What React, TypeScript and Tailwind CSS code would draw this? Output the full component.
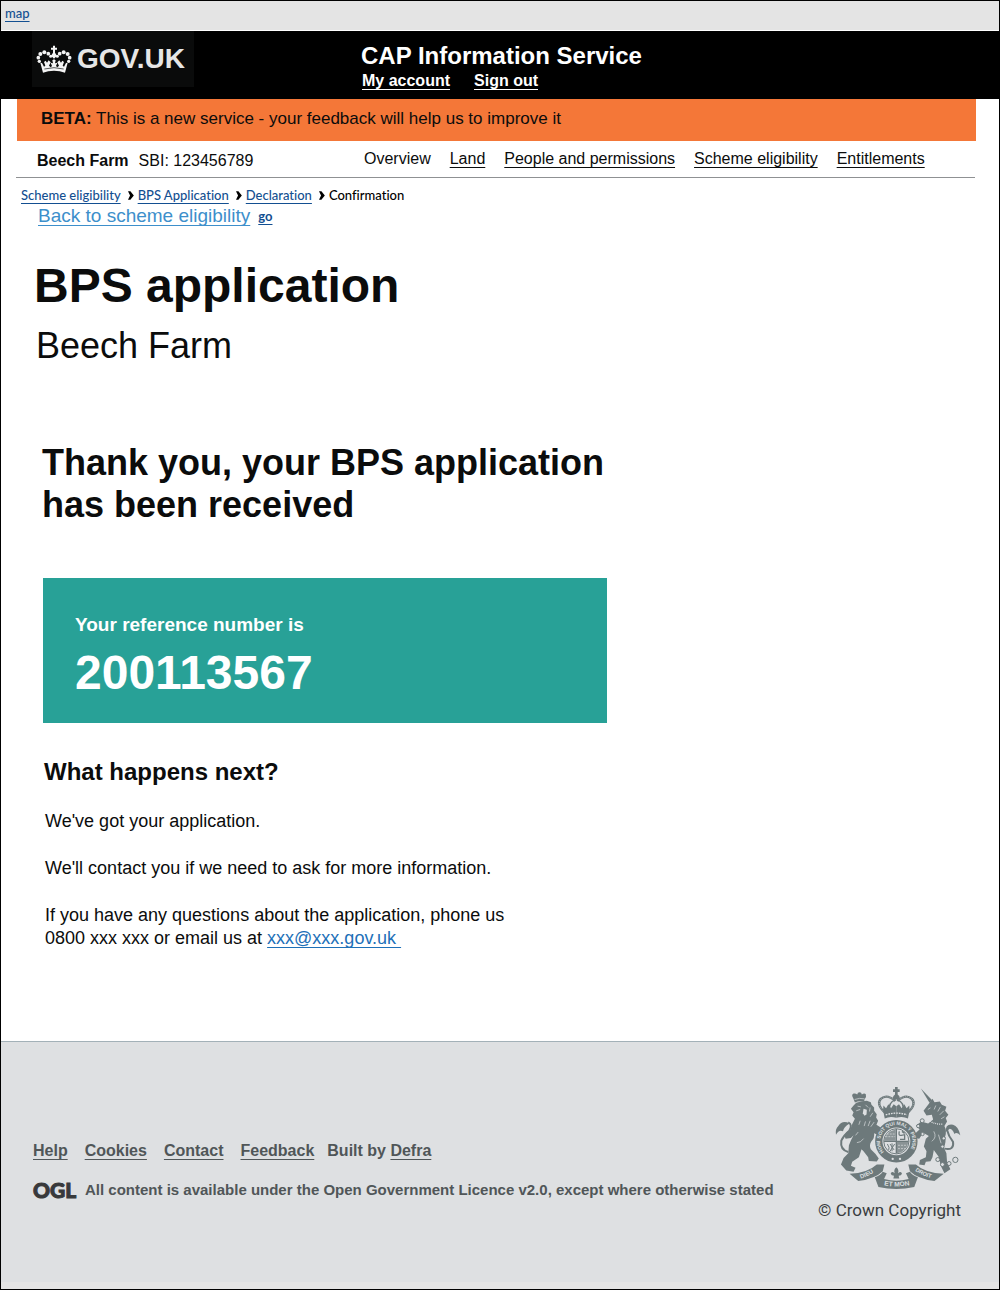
import React from "react";

const link = "underline decoration-1 underline-offset-[3px] [text-decoration-skip-ink:none]";

function GovCrown() {
  const half = (
    <g>
      <circle cx="55" cy="41" r="5.5" />
      <circle cx="43" cy="37" r="6" />
      <circle cx="31" cy="42" r="6" />
      <circle cx="25" cy="53" r="5.5" />
      <circle cx="28" cy="64" r="5" />
      <circle cx="62" cy="49" r="4.5" />
      <path d="M31 68L36 69L42 80L46 77L42 66L47 62L51 68L56 61L62 67L57 77L62 82L66 78L62 68L69 70L67 61L72 58V92Q54 92 39 98Z" />
    </g>
  );
  return (
    <svg viewBox="18 15 108 84" className="h-7 w-9 shrink-0" fill="#f4f4f4" aria-hidden="true">
      {half}
      <g transform="translate(144 0) scale(-1 1)">{half}</g>
      <path d="M69 17h6v6h6v6h-6v9l6 9-9 9-9-9 6-9v-9h-6v-6h6z" />
      <path d="M43 87Q72 79 101 87" fill="none" stroke="#0b0c0c" strokeWidth="2" />
    </svg>
  );
}

function Chevron() {
  return (
    <svg viewBox="0 0 7 11" className="mr-1 ml-[7px] h-[11px] w-[6px]" aria-hidden="true">
      <path d="M0 .5h2.8L6.8 5.5 2.8 10.5H0L2.4 5.5z" fill="#000" />
    </svg>
  );
}

function RoyalArms() {
  const ink = "#6d797b";
  const paper = "#dee0e2";
  const arch = (
    <g>
      <path d="M207 126Q182 102 196 86Q214 70 240 92" fill="none" stroke={ink} strokeWidth="7" />
      <path d="M207 126Q182 102 196 86Q214 70 240 92" fill="none" stroke={paper} strokeWidth="2" strokeDasharray="2 4" />
      <path d="M224 122Q216 98 241 88" fill="none" stroke={ink} strokeWidth="4" />
      <path d="M203 120L204 106L212 114L219 102L227 114L235 102L243 108V143Q224 137 208 145Z" fill={ink} />
    </g>
  );
  return (
    <svg viewBox="58 48 380 312" className="h-[104px] w-[126px]" role="img" aria-label="Royal coat of arms">
      <defs>
        <path id="garter" d="M209 249A49 49 0 1 1 277 249" />
        <path id="scrollLeft" d="M130 328Q162 320 190 296" />
        <path id="scrollMid" d="M200 345Q243 355 288 345" />
        <path id="scrollRight" d="M296 300Q326 322 360 328" />
      </defs>

      {/* lion */}
      <g fill={ink}>
        <path d="M113 84Q106 74 114 70Q120 68 125 73Q126 66 132 66Q138 66 139 73Q146 67 151 72Q154 80 147 88L146 95Q132 91 118 97Z" />
        <path d="M114 106L122 98L136 94L154 92L166 96L168 104L176 112L176 122L184 132L182 142L188 152L183 164L196 172L206 184L204 194L190 196L176 190Q178 204 168 214Q160 226 166 238Q180 250 190 266L184 275L160 273L158 262L144 244L138 238L130 262L110 276L106 288L120 294L114 306L92 302L76 284L84 264L98 250L100 226Q106 210 114 196L106 204L90 206L86 196L94 186L104 180L110 162L118 146L110 136L114 126L106 116Z" />
        <path d="M98 246Q73 240 77 212Q84 196 101 182Q112 164 98 157" fill="none" stroke={ink} strokeWidth="6" />
        <path d="M102 160Q80 148 68 168Q58 178 61 194Q70 178 82 184Q84 170 102 160Z" />
      </g>
      <g fill="none" stroke={paper} strokeWidth="2">
        <path d="M117 88Q132 82 147 86" />
        <path d="M126 108l10 2M150 104l8 8M164 112l-2 12M172 128l-8 12M134 152l-4 12M150 154l-4 14M164 152l-6 16M176 156l-10 14M144 206q-8 12-20 12M120 196l8-10" />
        <path d="M144 116l10 3-1 14-6 4-5-8z" fill={paper} stroke="none" />
        <path d="M122 122l12-4" />
      </g>

      {/* unicorn */}
      <g fill={ink}>
        <path d="M317 55L351 90L343 98Z" />
        <path d="M325 122L340 102L352 86L358 96L374 94L380 104L394 110L390 122L400 134L392 144L396 154L388 168Q396 184 390 200Q394 218 386 232L394 250L396 278L406 298L388 310L378 290L370 260L356 240L352 262L346 274L332 276L328 286L312 284L314 270L332 262L334 244L326 230L332 206L341 198L324 188L312 206L300 204L298 192L313 178L303 166L318 154L339 160L354 148L350 134L334 136Z" />
        <path d="M388 236Q418 242 414 216Q400 198 396 180" fill="none" stroke={ink} strokeWidth="6" />
        <path d="M392 186Q390 160 414 164Q430 168 436 196Q424 184 418 192Q414 178 404 176Z" />
      </g>
      <g fill="none" stroke={paper} strokeWidth="2">
        <path d="M338 118l8-5M362 106l-5 12M376 110l-8 14M386 122l-12 12M388 140l-10 6" />
        <path d="M336 144Q350 164 384 162" strokeWidth="4" strokeDasharray="3 3" />
        <path d="M356 184q10 18-6 30M370 194l8 26" />
      </g>
      <g fill={paper} stroke={ink} strokeWidth="3">
        <circle cx="321" cy="152" r="6" />
        <circle cx="309" cy="168" r="5" />
        <circle cx="322" cy="192" r="5" />
        <circle cx="368" cy="269" r="6" />
        <circle cx="382" cy="284" r="6" />
        <circle cx="402" cy="281" r="6" />
        <circle cx="421" cy="270" r="8" />
        <circle cx="386" cy="205" r="5" />
        <circle cx="382" cy="230" r="5" />
      </g>

      {/* scroll */}
      <path d="M102 312Q156 310 184 284L207 284L202 304Q180 326 128 334Z" fill={ink} />
      <path d="M386 312Q330 310 302 284L279 284L284 304Q306 326 358 334Z" fill={ink} />
      <path d="M178 322Q195 318 202 306L214 310L206 328Q243 338 280 328L272 310L284 306Q291 318 308 322L297 352Q243 364 189 352Z" fill={ink} />
      <path d="M243 292Q252 300 248 310Q258 302 260 312Q258 318 250 318L252 326H234L236 318Q228 318 226 312Q228 302 238 310Q234 300 243 292Z" fill={ink} />

      {/* garter and shield */}
      <circle cx="243" cy="214" r="53" fill="none" stroke={ink} strokeWidth="22" />
      <circle cx="243" cy="214" r="38" fill={paper} stroke={ink} strokeWidth="3" />
      <path d="M241 178v34H207Q210 184 241 178zM245 216h34Q276 244 245 250z" fill={ink} opacity=".75" />
      <g fill="none" stroke={paper} strokeWidth="2">
        <path d="M214 192h26M210 200h30M248 226h28M248 236h24" strokeDasharray="6 3" />
      </g>
      <g fill="none" stroke={ink} strokeWidth="4">
        <path d="M243 177v74M206 214h74" />
        <path d="M252 184q-4 14 6 12t10-2v14h-14M260 184l8 6" />
        <path d="M216 222q8 12 4 18M230 220v24M238 222l-14 22M224 222l12 18" strokeWidth="3" />
      </g>
      <circle cx="232" cy="267" r="3.5" fill={paper} />
      <circle cx="254" cy="267" r="3.5" fill={paper} />

      {/* royal crown */}
      {arch}
      <g transform="translate(486 0) scale(-1 1)">{arch}</g>
      <path d="M239 50h8v7h6v8h-6v8q10 8 4 15h-16q-6-7 4-15v-8h-6v-8h6z" fill={ink} />
      <path d="M211 134Q243 124 275 134" fill="none" stroke={paper} strokeWidth="4" strokeDasharray="5 3" />

      <g fill={paper} fontFamily="Liberation Sans" fontWeight="700">
        <text fontSize="15"><textPath href="#garter" startOffset="4">HONI SOIT QUI MAL Y PENSE</textPath></text>
        <text fontSize="18"><textPath href="#scrollLeft" startOffset="6">DIEU</textPath></text>
        <text fontSize="20"><textPath href="#scrollMid" startOffset="6">ET MON</textPath></text>
        <text fontSize="17"><textPath href="#scrollRight" startOffset="4">DROIT</textPath></text>
      </g>
    </svg>
  );
}

const nav = ["Land", "People and permissions", "Scheme eligibility", "Entitlements"];
const crumbs = ["Scheme eligibility", "BPS Application", "Declaration"];

export default function App() {
  return (
    <div className="mr-[3px] border border-black bg-white font-['Liberation_Sans',Arial,sans-serif] text-[#0b0c0c]">
      <div className="flex h-[30px] items-start border-b border-white bg-[#e4e4e4] px-1 pt-1 font-[Lato,sans-serif] text-[13px] leading-4 font-medium">
        <a href="#" className={`text-[#134f91] ${link}`}>map</a>
      </div>

      <header className="flex h-[68px] bg-black text-white">
        <div className="ml-[31px] flex h-14 w-[162px] shrink-0 items-center bg-[#0a0b0b] pl-1">
          <GovCrown />
          <span className="ml-[5px] text-[28px] leading-8 font-bold text-[#e6e6e6]">GOV.UK</span>
        </div>
        <div className="ml-[167px] pt-[10px]">
          <div className="text-2xl leading-[30px] font-bold">CAP Information Service</div>
          <div className="flex gap-6 pl-px text-base leading-5 font-bold">
            <a href="#" className={link}>My account</a>
            <a href="#" className={link}>Sign out</a>
          </div>
        </div>
      </header>

      <div className="mr-[23px] ml-4 h-[42px] bg-[#f47738] px-6 pt-2 text-[17px] leading-6">
        <strong>BETA:</strong> This is a new service - your feedback will help us to improve it
      </div>

      <div className="mr-6 ml-[15px] flex h-[37px] border-b border-[#8f9193] pl-[21px] text-base leading-5">
        <div className="flex w-[327px] shrink-0 gap-[10px] pt-[10px]">
          <strong>Beech Farm</strong>
          <span>SBI: 123456789</span>
        </div>
        <nav className="flex gap-[19px] pt-2 whitespace-nowrap">
          <span>Overview</span>
          {nav.map((n) => (
            <a key={n} href="#" className={link}>{n}</a>
          ))}
        </nav>
      </div>

      <nav aria-label="Breadcrumb" className="mt-[7px] flex items-center pl-5 font-[Lato,sans-serif] text-[13px] leading-5 font-medium [font-variant-ligatures:none]">
        {crumbs.map((c) => (
          <React.Fragment key={c}>
            <a href="#" className={`text-[#134f91] ${link}`}>{c}</a>
            <Chevron />
          </React.Fragment>
        ))}
        <span className="text-black">Confirmation</span>
      </nav>
      <div className="mt-px flex items-center gap-2 pl-[37px] leading-5">
        <a href="#" className={`text-[19px] text-[#3d8fcb] ${link}`}>Back to scheme eligibility</a>
        <a href="#" className={`font-[Lato,sans-serif] text-[13px] font-bold text-[#134f91] ${link}`}>go</a>
      </div>

      <main className="pr-6 pb-[91px]">
        <h1 className="mt-9 pl-[33px] text-5xl leading-[48px] font-bold">BPS application</h1>
        <p className="mt-4 pl-[35px] text-4xl leading-10">Beech Farm</p>
        <h2 className="mt-[76px] max-w-[640px] pl-[41px] text-4xl leading-[42px] font-bold">
          Thank you, your BPS application has been received
        </h2>
        <section className="mt-[52px] ml-[42px] max-w-[564px] bg-[#28a197] px-8 pt-[35px] pb-[26px] font-bold text-white">
          <p className="text-[19px] leading-6">Your reference number is</p>
          <p className="mt-3 text-5xl leading-[48px]">200113567</p>
        </section>
        <h3 className="mt-[35px] pl-[43px] text-2xl leading-7 font-bold">What happens next?</h3>
        <div className="mt-6 flex max-w-[560px] flex-col gap-6 pl-11 text-lg leading-[23px]">
          <p>We've got your application.</p>
          <p>We'll contact you if we need to ask for more information.</p>
          <p>
            If you have any questions about the application, phone us
            <br />
            0800 xxx xxx or email us at <a href="#" className={`text-[#1d70b8] ${link}`}>xxx@xxx.gov.uk&nbsp;</a>
          </p>
        </div>
      </main>

      <footer className="border-t border-[#a3b1b8] bg-[#dee0e2] font-bold text-[#505658]">
        <div className="flex h-60 items-start justify-between pr-[38px] pl-8">
          <div className="pt-[99px]">
            <div className="flex gap-[17px] text-base leading-5">
              <a href="#" className={link}>Help</a>
              <a href="#" className={link}>Cookies</a>
              <a href="#" className={link}>Contact</a>
              <a href="#" className={link}>Feedback</a>
              <span className="-ml-1">Built by <a href="#" className={link}>Defra</a></span>
            </div>
            <div className="mt-[19px] flex items-center text-[15px] leading-5">
              <span className="w-[52px] shrink-0 font-[Lato,sans-serif] text-[21px] font-black text-[#38393b] [-webkit-text-stroke:1px]">OGL</span>
              <p>All content is available under the Open Government Licence v2.0, except where otherwise stated</p>
            </div>
          </div>
          <div className="flex flex-col items-end pt-11">
            <RoyalArms />
            <p className="mt-[10px] font-[Roboto,sans-serif] text-[17px] leading-5 font-normal whitespace-nowrap text-[#3a3d3f]">© Crown Copyright</p>
          </div>
        </div>
        <div className="h-[7px] bg-[#e4e4e4]" />
      </footer>
    </div>
  );
}
